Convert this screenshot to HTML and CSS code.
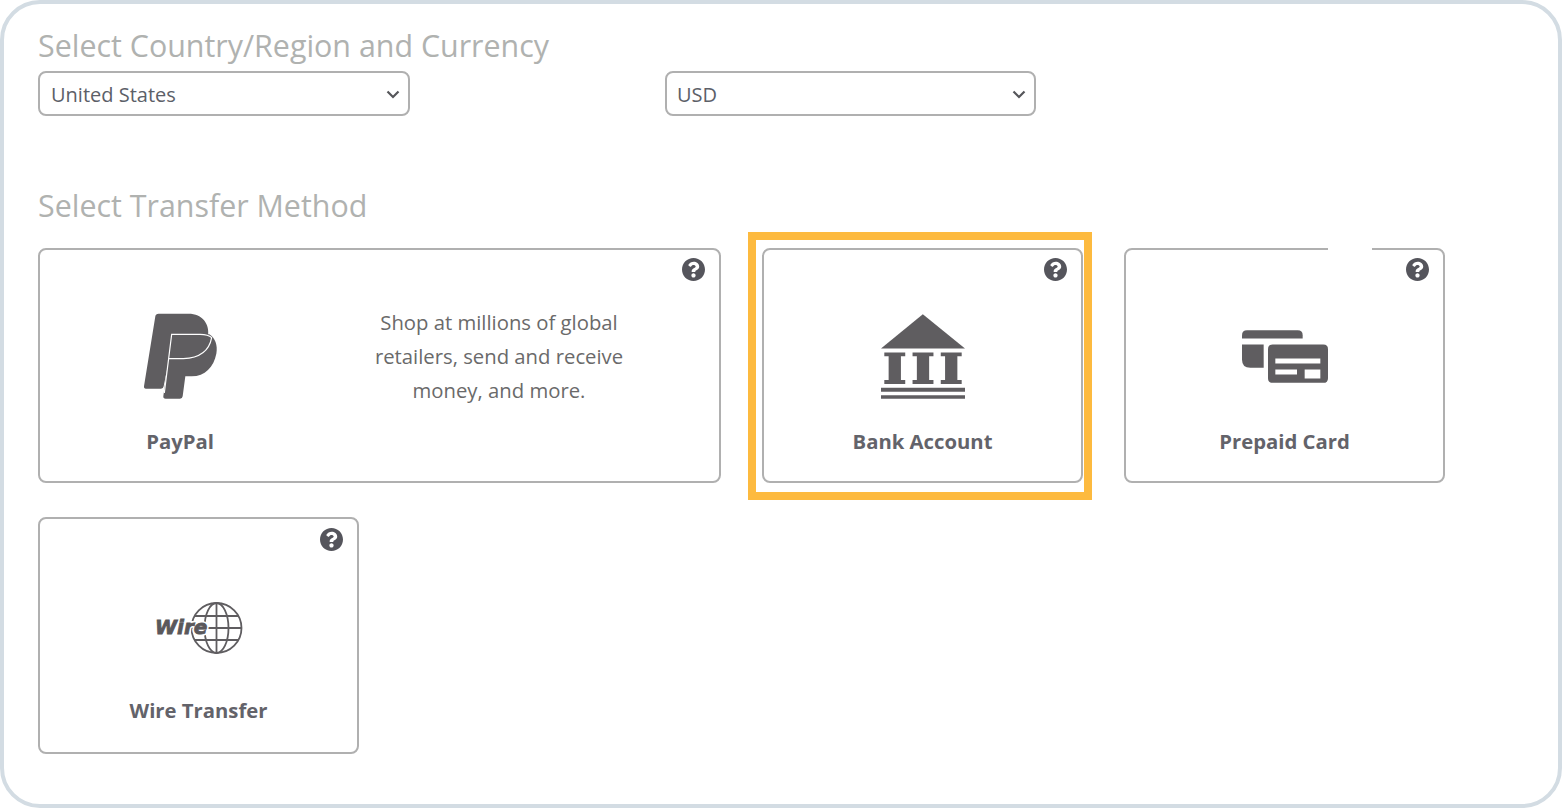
FILE: index.html
```html
<!DOCTYPE html>
<html lang="en">
<head>
<meta charset="utf-8">
<title>Select Transfer Method</title>
<link rel="stylesheet" href="styles.css">
</head>
<body>
<svg class="defs" width="0" height="0" aria-hidden="true">
  <symbol id="help" viewBox="8 8 496 496"><path d="M504 256c0 136.997-111.043 248-248 248S8 392.997 8 256C8 119.083 119.043 8 256 8s248 111.083 248 248zM262.655 90c-54.497 0-89.255 22.957-116.549 63.758-3.536 5.286-2.353 12.415 2.715 16.258l34.699 26.31c5.205 3.947 12.621 3.008 16.665-2.122 17.864-22.658 30.113-35.797 57.303-35.797 20.429 0 45.698 13.148 45.698 32.958 0 14.976-12.363 22.667-32.534 33.976C247.128 238.528 216 254.941 216 296v4c0 6.627 5.373 12 12 12h56c6.627 0 12-5.373 12-12v-1.333c0-28.462 83.186-29.647 83.186-106.667 0-58.002-60.165-102-116.531-102zM256 338c-25.365 0-46 20.635-46 46 0 25.364 20.635 46 46 46s46-20.636 46-46c0-25.365-20.635-46-46-46z"/></symbol>
  <symbol id="chevron" viewBox="0 0 14 9"><path d="M1.5 1.5 7 7l5.500-5.500"/></symbol>
</svg>
<main class="frame">
  <h2 class="heading">Select Country/Region and Currency</h2>
  <div class="selects">
    <div class="select"><span>United States</span><svg class="chevron"><use href="#chevron"/></svg></div>
    <div class="select"><span>USD</span><svg class="chevron"><use href="#chevron"/></svg></div>
  </div>
  <h2 class="heading heading-transfer">Select Transfer Method</h2>
  <div class="methods">
    <section class="card card-wide">
      <svg class="help"><use href="#help"/></svg>
      <div class="method">
        <div class="icon-slot">
          <svg class="icon-paypal" viewBox="72 188 222 261">
            <path class="pp" d="M116 190H205C248 190 270 222 264 258C258 298 225 322 180 324H148L131 408Q130 415 123 415H78Q71 415 72 408L106 198Q107 190 116 190Z"/>
            <path class="pp" d="M155 252H268C285 262 294 285 289 310C281 350 255 378 215 378H196L188 438Q187 445 180 445H137Q129 445 130 438Z"/>
            <path class="pp-line" d="M133 428 155 252H240C258 252 268 255 275 262C268 300 240 323 190 325H146"/>
          </svg>
        </div>
        <div class="label">PayPal</div>
      </div>
      <p class="desc">Shop at millions of global retailers, send and receive money, and more.</p>
    </section>
    <section class="card">
      <svg class="help"><use href="#help"/></svg>
      <div class="method">
        <div class="icon-slot">
          <svg class="icon-bank" viewBox="62 42 253 254">
            <path d="M188 42 315 145H62Z"/>
            <path d="M72 157h63v11h-13v72h13v12H72v-12h13v-72H72Z"/>
            <path d="M157 157h63v11h-13v72h13v12h-63v-12h13v-72h-13Z"/>
            <path d="M242 157h63v11h-13v72h13v12h-63v-12h13v-72h-13Z"/>
            <path d="M62 263h253v12H62Z"/>
            <path d="M62 286h253v10H62Z"/>
          </svg>
        </div>
        <div class="label">Bank Account</div>
      </div>
      <div class="highlight"></div>
    </section>
    <section class="card">
      <svg class="help"><use href="#help"/></svg>
      <div class="method">
        <div class="icon-slot">
          <svg class="icon-prepaid" viewBox="125 270 258 158">
            <path d="M140 270H292Q307 270 307 285V295H125V285Q125 270 140 270Z"/>
            <path d="M125 313H190V383H150Q125 383 125 358Z"/>
            <path fill-rule="evenodd" d="M217 313H369Q383 313 383 327V414Q383 428 369 428H217Q203 428 203 414V327Q203 313 217 313ZM225 355V370H360V355ZM225 388V403H290V388ZM313 388V415H360V388Z"/>
          </svg>
        </div>
        <div class="label">Prepaid Card</div>
      </div>
      <div class="patch"></div>
    </section>
    <section class="card card-tall">
      <svg class="help"><use href="#help"/></svg>
      <div class="method">
        <div class="icon-slot">
          <svg class="icon-wire" viewBox="0 0 88 54">
            <g class="globe">
              <circle cx="61.500" cy="27" r="25"/>
              <ellipse cx="61.500" cy="27" rx="12" ry="25"/>
              <path d="M61.500 2V52M39 15H84M37 27H86M39 39H84"/>
            </g>
            <text class="wire-halo" x="0" y="33" aria-hidden="true">Wire</text>
            <text class="wire-text" x="0" y="33">Wire</text>
          </svg>
        </div>
        <div class="label">Wire Transfer</div>
      </div>
    </section>
  </div>
</main>
</body>
</html>
```
FILE: styles.css
```css
* { box-sizing: border-box; }
html, body { margin: 0; padding: 0; background: #fff; }
body { font-family: "Open Sans", "Liberation Sans", sans-serif; }
.defs { position: absolute; }
.frame {
  width: 1562px;
  height: 808px;
  border: 4px solid #d3dce3;
  border-radius: 40px;
  padding: 22px 0 0 34px;
  overflow: hidden;
}
.heading {
  margin: 0;
  font-size: 30.400px;
  line-height: 40px;
  font-weight: 400;
  color: #b0b2b0;
}
.heading-transfer { margin-top: 70px; }
.selects { display: flex; gap: 255px; margin-top: 5px; }
.select {
  width: 372px;
  height: 45px;
  display: flex;
  align-items: center;
  justify-content: space-between;
  padding: 2px 8px 0 11px;
  border: 2px solid #b0b0b0;
  border-radius: 8px;
  font-size: 20px;
  color: #5c6068;
}
.select + .select { width: 371px; padding-left: 10px; }
.chevron { width: 14px; height: 9px; fill: none; stroke: #55565a; stroke-width: 2.200; }
.methods {
  display: flex;
  flex-wrap: wrap;
  gap: 34px 41px;
  margin-top: 22px;
  width: 1420px;
}
.card {
  position: relative;
  width: 321px;
  height: 235px;
  display: flex;
  border: 2px solid #b0b0b0;
  border-radius: 8px;
  background: #fff;
}
.card-wide { width: 683px; }
.card-tall { height: 237px; }
.card-tall .help { top: 9px; }
.help { position: absolute; top: 8px; right: 14.500px; width: 23px; height: 23px; fill: #55555c; }
.method {
  width: 100%;
  padding-top: 64px;
  display: flex;
  flex-direction: column;
  align-items: center;
}
.card-wide .method { width: 280px; flex: none; }
.icon-slot { height: 85px; display: flex; align-items: center; justify-content: center; }
.label {
  margin-top: 28px;
  font-size: 20.300px;
  line-height: 28px;
  font-weight: 700;
  color: #63636a;
}
.desc {
  width: 270px;
  margin: 56px 0 0 44px;
  font-size: 20.300px;
  line-height: 33.750px;
  font-weight: 400;
  text-align: center;
  color: #6a6a6a;
}
.icon-paypal { width: 74px; height: 87px; overflow: visible; margin-left: 2px; }
.pp { fill: #5f5d60; }
.pp-line { fill: none; stroke: #fff; stroke-width: 3.500; }
.icon-bank { width: 84px; height: 85px; fill: #5f5d60; }
.icon-prepaid { width: 86px; height: 53px; fill: #5f5d60; }
.icon-wire { width: 88px; height: 54px; overflow: visible; margin-top: 4px; }
.globe { fill: none; stroke: #5f5d60; stroke-width: 1.800; }
.wire-halo, .wire-text {
  font-family: "DejaVu Sans", sans-serif;
  font-size: 20px;
  font-weight: 700;
  font-style: italic;
}
.wire-halo { fill: #fff; stroke: #fff; stroke-width: 4px; }
.wire-text { fill: #5a585b; stroke: #5a585b; stroke-width: 0.800px; }
.highlight {
  position: absolute;
  top: -18px;
  left: -16px;
  right: -11px;
  bottom: -19px;
  border: 8px solid #fdba3f;
  pointer-events: none;
}
.patch { position: absolute; top: -5px; left: 202px; width: 44px; height: 6px; background: #fff; }
```
